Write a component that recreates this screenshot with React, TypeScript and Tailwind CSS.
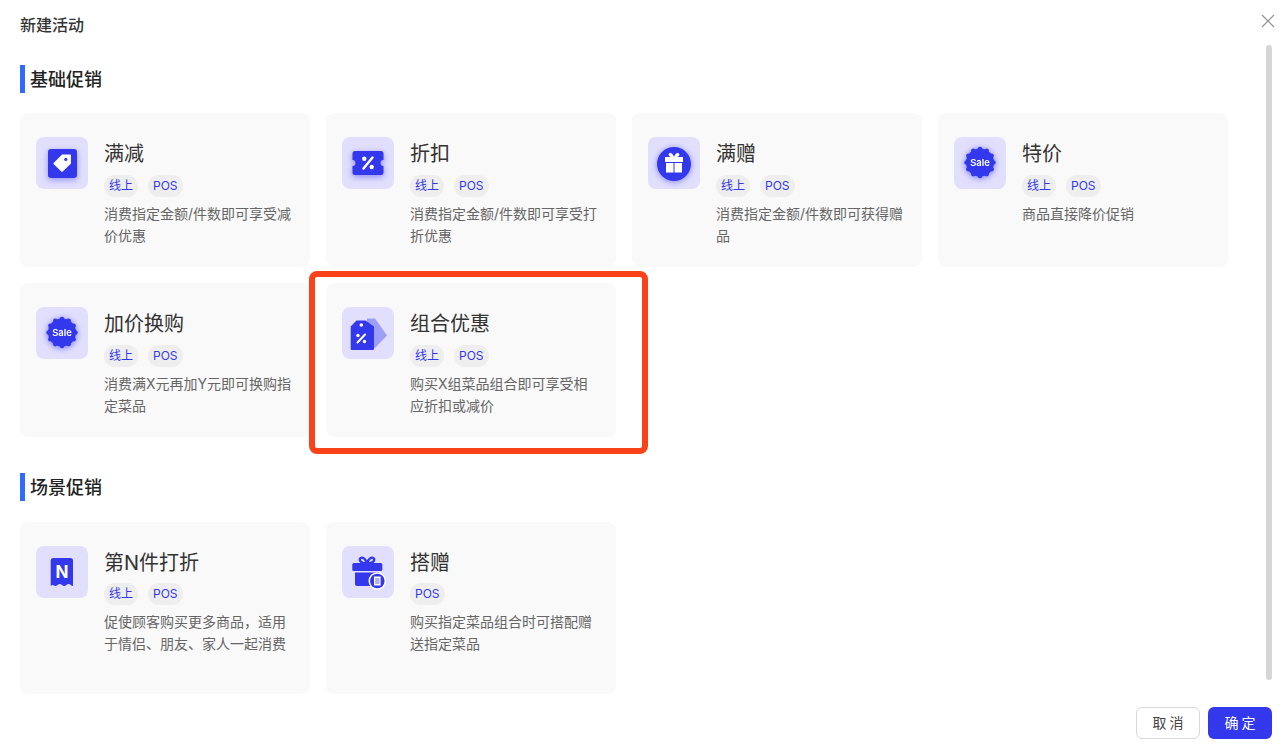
import React from 'react';

const BLUE = '#3338ec';

const TagIcon = () => (
  <svg viewBox="0 0 52 52" className="w-[52px] h-[52px] drop-shadow-[0_2px_3px_rgba(51,56,236,0.45)]">
    <rect x="12" y="12" width="29" height="29" rx="3" fill={BLUE} />
    <path d="M18 26.500 26.500 18H34.300V26.200L26 34.300Z" fill="#fff" stroke="#fff" strokeWidth="1.200" strokeLinejoin="round" />
    <circle cx="29.800" cy="22.400" r="1.600" fill={BLUE} />
  </svg>
);

const CouponIcon = () => (
  <svg viewBox="0 0 52 52" className="w-[52px] h-[52px] drop-shadow-[0_2px_3px_rgba(51,56,236,0.5)]">
    <path
      d="M13 14H39A2.500 2.500 0 0 1 41.500 16.500V23A3 3 0 0 0 41.500 29V35.500A2.500 2.500 0 0 1 39 38H13A2.500 2.500 0 0 1 10.500 35.500V29A3 3 0 0 0 10.500 23V16.500A2.500 2.500 0 0 1 13 14Z"
      fill={BLUE}
    />
    <circle cx="22.300" cy="21.800" r="2.200" fill="#fff" />
    <circle cx="29.700" cy="30" r="2.200" fill="#fff" />
    <path d="M30.500 20.500 21.500 31.500" stroke="#fff" strokeWidth="2.400" strokeLinecap="round" />
  </svg>
);

const GiftCircleIcon = () => (
  <svg viewBox="0 0 52 52" className="w-[52px] h-[52px] drop-shadow-[0_1px_3px_rgba(51,56,236,0.55)]">
    <circle cx="26" cy="27" r="17" fill={BLUE} />
    <path d="M26 20c-1-3-3-4.500-4.500-3.800S20.500 19.500 23 20ZM26 20c1-3 3-4.500 4.500-3.800S31.500 19.500 29 20Z" fill="#fff" />
    <rect x="17" y="20" width="18" height="5" fill="#fff" />
    <rect x="18" y="26" width="7.500" height="9.500" fill="#fff" />
    <rect x="26.500" y="26" width="7.500" height="9.500" fill="#fff" />
  </svg>
);

const SaleIcon = () => (
  <svg viewBox="0 0 52 52" className="w-[52px] h-[52px] drop-shadow-[0_1px_3px_rgba(51,56,236,0.6)]">
    <circle cx="26" cy="25.500" r="14" fill={BLUE} />
    {Array.from({ length: 12 }).map((_, i) => {
      const a = (i * Math.PI) / 6;
      return <circle key={i} cx={26 + 13.4 * Math.sin(a)} cy={25.5 - 13.4 * Math.cos(a)} r="2.300" fill={BLUE} />;
    })}
    <text x="26" y="28.800" textAnchor="middle" fontSize="9.500" fontWeight="600" fill="#fff" fontFamily="Inter, sans-serif">
      Sale
    </text>
  </svg>
);

const ComboIcon = () => (
  <svg viewBox="0 0 52 52" className="w-[52px] h-[52px]">
    <path d="M25 11.500H33L45 28.500 33 41H25Z" fill="#9d9ef6" strokeLinejoin="round" />
    <path d="M14.500 13.500H23.500L32 19.500V42A1 1 0 0 1 31 43H9.700A1 1 0 0 1 8.700 42V19.500Z" fill={BLUE} />
    <circle cx="19.300" cy="18" r="1.800" fill="#fff" />
    <circle cx="16" cy="28.500" r="1.700" fill="#fff" />
    <circle cx="22.500" cy="34.500" r="1.700" fill="#fff" />
    <path d="M23 27.500 15.500 35.500" stroke="#fff" strokeWidth="2" strokeLinecap="round" />
  </svg>
);

const NIcon = () => (
  <svg viewBox="0 0 52 52" className="w-[52px] h-[52px]">
    <path
      d="M17.500 12H34.500A2.500 2.500 0 0 1 37 14.500V40C35 40 34.500 38 32.600 38S30 40 28.200 40 25.600 38 23.800 38 21.200 40 19.400 40 16.900 38 14.700 40V14.500A2.500 2.500 0 0 1 17.500 12Z"
      fill={BLUE}
    />
    <text x="26" y="31.500" textAnchor="middle" fontSize="17" fontWeight="700" fill="#fff" fontFamily="Inter, sans-serif">
      N
    </text>
  </svg>
);

const GiftBadgeIcon = () => (
  <svg viewBox="0 0 52 52" className="w-[52px] h-[52px]">
    <path d="M25 17c-1.500-4-4-6-6-5.200s-1.500 4.500 2 5.200ZM25 17c1.500-4 4-6 6-5.200s1.500 4.500-2 5.200Z" fill="none" stroke={BLUE} strokeWidth="2.400" />
    <rect x="10.300" y="17" width="30" height="8" rx="1.500" fill={BLUE} />
    <path d="M13 26.500H37V38A2 2 0 0 1 35 40H15A2 2 0 0 1 13 38Z" fill={BLUE} />
    <circle cx="35.300" cy="35" r="8.800" fill="#fff" />
    <circle cx="35.300" cy="35" r="7.300" fill={BLUE} />
    <rect x="32" y="30.500" width="6.600" height="9" fill="#fff" />
    <rect x="33.200" y="32" width="4.200" height="6" fill="#aeb0f7" />
  </svg>
);

type Promo = {
  title: string;
  desc: string;
  icon: React.ReactNode;
  tags: string[];
};

const basePromos: Promo[] = [
  { title: '满减', desc: '消费指定金额/件数即可享受减价优惠', icon: <TagIcon />, tags: ['线上', 'POS'] },
  { title: '折扣', desc: '消费指定金额/件数即可享受打折优惠', icon: <CouponIcon />, tags: ['线上', 'POS'] },
  { title: '满赠', desc: '消费指定金额/件数即可获得赠品', icon: <GiftCircleIcon />, tags: ['线上', 'POS'] },
  { title: '特价', desc: '商品直接降价促销', icon: <SaleIcon />, tags: ['线上', 'POS'] },
  { title: '加价换购', desc: '消费满X元再加Y元即可换购指定菜品', icon: <SaleIcon />, tags: ['线上', 'POS'] },
  { title: '组合优惠', desc: '购买X组菜品组合即可享受相应折扣或减价', icon: <ComboIcon />, tags: ['线上', 'POS'] },
];

const scenePromos: Promo[] = [
  { title: '第N件打折', desc: '促使顾客购买更多商品，适用于情侣、朋友、家人一起消费', icon: <NIcon />, tags: ['线上', 'POS'] },
  { title: '搭赠', desc: '购买指定菜品组合时可搭配赠送指定菜品', icon: <GiftBadgeIcon />, tags: ['POS'] },
];

const PromoCard = ({ promo, tall }: { promo: Promo; tall?: boolean }) => (
  <div className={`flex gap-4 rounded-lg bg-[#f9f9f9] pl-4 pr-4 pt-6 ${tall ? 'h-[172px]' : 'h-[154px]'}`}>
    <div className="h-[52px] w-[52px] shrink-0 rounded-lg bg-[#e2dffd]">{promo.icon}</div>
    <div className="min-w-0 flex-1">
      <div className="pt-[2px] text-[20px] leading-[30px] text-[#333333]">{promo.title}</div>
      <div className={`flex gap-2.5 ${tall ? 'mt-[5px]' : 'mt-1.5'}`}>
        {promo.tags.map(tag => (
          <span key={tag} className="flex h-[22px] items-center rounded-full bg-[#eeeeee] px-[5px] text-[12px] text-[#3338ec]">
            {tag}
          </span>
        ))}
      </div>
      <p className="mt-1.5 text-[14px] leading-[22px] text-[#666666]">{promo.desc}</p>
    </div>
  </div>
);

const SectionTitle = ({ children }: { children: React.ReactNode }) => (
  <div className="flex h-[28px] items-center border-l-[5px] border-[#2f6bff] pl-[5px] text-[18px] font-medium text-[#222222]">
    {children}
  </div>
);

const App: React.FC = () => {
  return (
    <div className="relative flex h-[753px] w-full flex-col overflow-hidden bg-white font-['Inter','Noto_Sans_CJK_SC',sans-serif]">
      <header className="flex h-[52px] shrink-0 items-center justify-between pb-0.5 pl-5 pr-[13px]">
        <h1 className="text-[16px] font-medium text-[#333333]">新建活动</h1>
        <svg viewBox="0 0 14 14" className="mb-[8px] h-[14px] w-[14px]" fill="none" stroke="#8c8c8c" strokeWidth="1.100">
          <path d="M1 1 13 13M13 1 1 13" />
        </svg>
      </header>

      <main className="flex-1 pl-5">
        <div className="w-[1208px] pt-[13px]">
          <SectionTitle>基础促销</SectionTitle>
          <div className="mt-5 grid grid-cols-4 gap-4">
            {basePromos.map(p => (
              <PromoCard key={p.title} promo={p} />
            ))}
          </div>

          <div className="mt-9">
            <SectionTitle>场景促销</SectionTitle>
          </div>
          <div className="mt-[21px] grid grid-cols-4 gap-4">
            {scenePromos.map(p => (
              <PromoCard key={p.title} promo={p} tall />
            ))}
          </div>
        </div>
      </main>

      <footer className="flex shrink-0 justify-end gap-2 pb-[14px] pr-4">
        <button className="h-8 w-16 rounded-md border border-[#d9d9d9] bg-white pb-0.5 text-[14px] text-[#444444] [word-spacing:-1px]">取 消</button>
        <button className="h-8 w-16 rounded-md bg-[#3338ec] pb-0.5 text-[14px] text-white [word-spacing:-1px]">确 定</button>
      </footer>

      {/* scrollbar thumb */}
      <div className="absolute left-[1266px] top-[45px] h-[635px] w-[6px] rounded-full bg-[#d6d6d6]" />
      {/* red annotation box */}
      <div className="absolute left-[309px] top-[271px] h-[183px] w-[339px] rounded-lg border-[6px] border-[#f9411a]" />
    </div>
  );
};

export default App;
